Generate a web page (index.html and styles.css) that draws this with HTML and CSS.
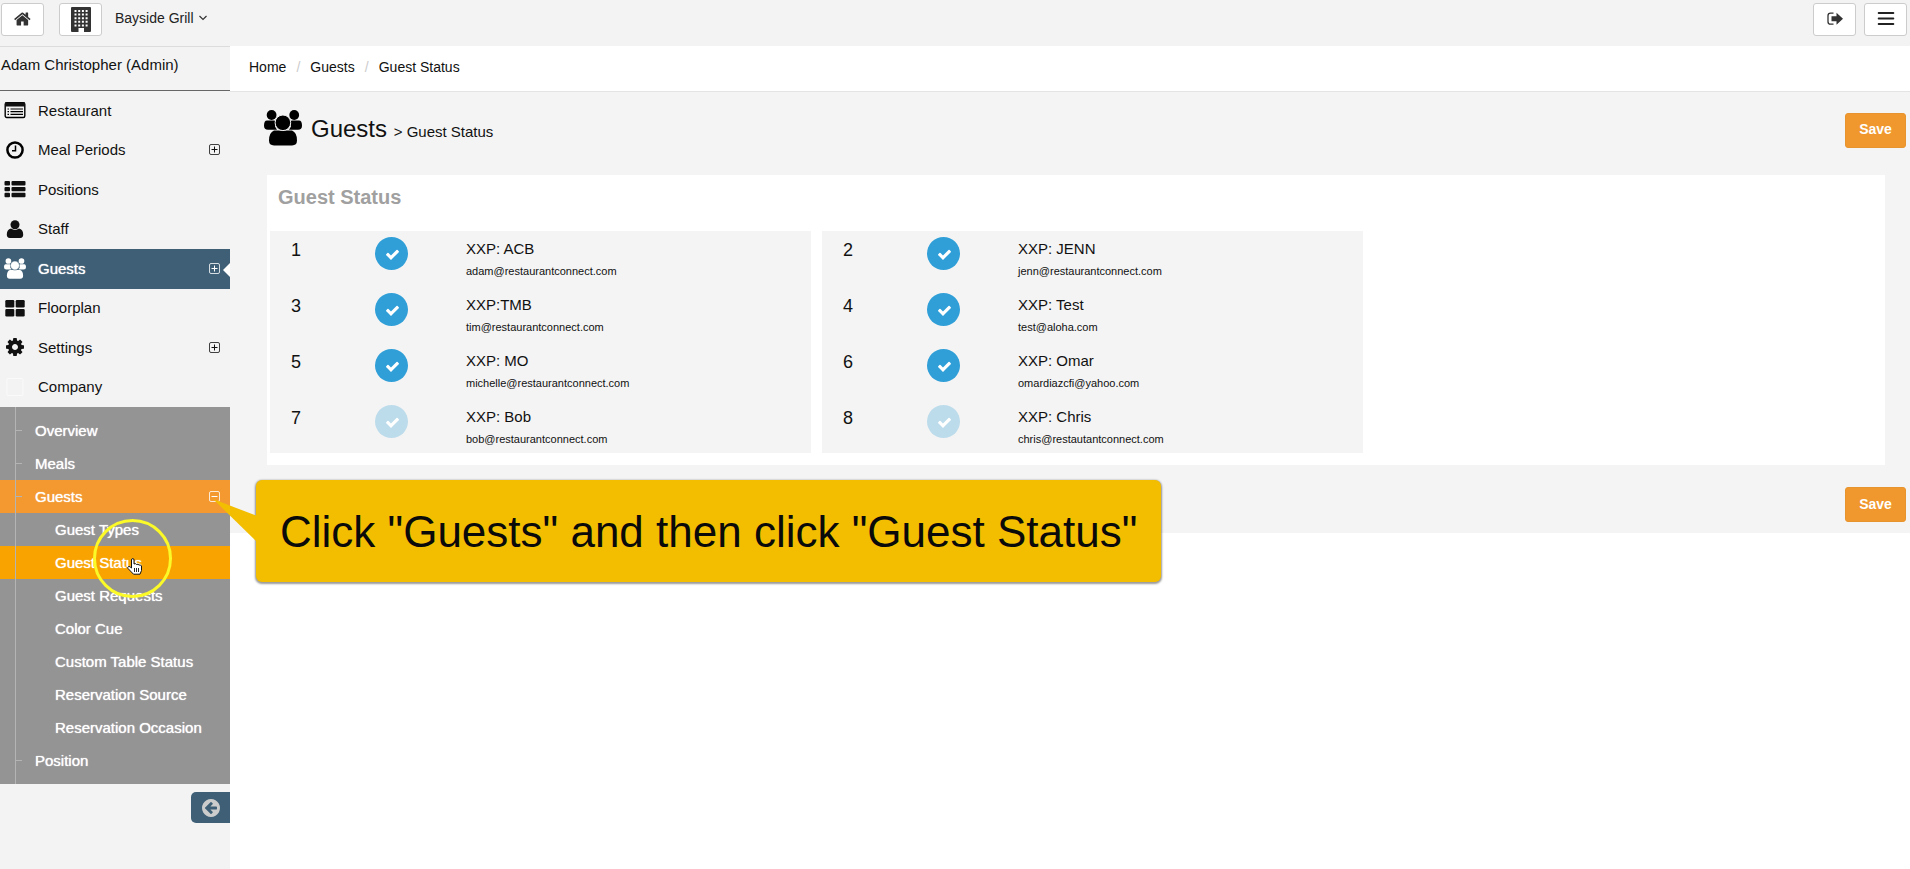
FILE: index.html
```html
<!DOCTYPE html>
<html lang="en">
<head>
<meta charset="utf-8">
<meta name="viewport" content="width=device-width, initial-scale=1">
<title>Guests - Guest Status</title>
<link rel="stylesheet" href="styles.css">
</head>
<body>
<svg class="symbols" aria-hidden="true">
  <symbol id="group" viewBox="0 0 38 36">
    <circle cx="7.6" cy="5" r="4.9"/><circle cx="30.2" cy="5" r="4.9"/>
    <path d="M3 10.500h7q2 0 2 2l-1 4 2 3.300H4q-4 0-4-4 0-5.300 3-5.300zM35 10.500h-7q-2 0-2 2l1 4-2 3.300h9q4 0 4-4 0-5.300-3-5.300z"/>
    <path d="M10 20.600h18q5 2 5 10 0 4.900-5 4.900H10q-5 0-5-4.900 0-8 5-10z"/>
    <circle class="halo" cx="18.900" cy="12.800" r="7.800"/>
  </symbol>
  <symbol id="plus" viewBox="0 0 11 11">
    <rect x=".5" y=".5" width="10" height="10" rx="1.500" fill="none" stroke="currentColor" stroke-width=".8"/>
    <path d="M2.500 5.500h6M5.500 2.500v6" stroke="currentColor"/>
  </symbol>
  <symbol id="minus" viewBox="0 0 11 11">
    <rect x=".5" y=".5" width="10" height="10" rx="1.500" fill="none" stroke="currentColor" stroke-width=".8"/>
    <path d="M2.500 5.500h6" stroke="currentColor"/>
  </symbol>
  <symbol id="check" viewBox="0 0 1792 1792">
    <path d="M1671 566q0 40-28 68l-724 724-136 136q-28 28-68 28t-68-28l-136-136-362-362q-28-28-28-68t28-68l136-136q28-28 68-28t68 28l294 295 656-657q28-28 68-28t68 28l136 136q28 28 28 68z"/>
  </symbol>
  <symbol id="building" viewBox="0 0 20 25">
    <path fill-rule="evenodd" d="M1 0h18q1 0 1 1v23q0 1-1 1h-6v-4H7.500v4H1q-1 0-1-1V1q0-1 1-1zM3.500 3v2h2V3zM7.200 3v2h2V3zM10.900 3v2h2V3zM14.600 3v2h2V3zM3.500 6.600v2h2v-2zM7.200 6.600v2h2v-2zM10.900 6.600v2h2v-2zM14.600 6.600v2h2v-2zM3.500 10.200v2h2v-2zM7.200 10.200v2h2v-2zM10.900 10.200v2h2v-2zM14.600 10.200v2h2v-2zM3.500 13.800v2h2v-2zM7.200 13.800v2h2v-2zM10.900 13.800v2h2v-2zM14.600 13.800v2h2v-2zM3.500 17.400v2h2v-2zM7.200 17.400v2h2v-2zM10.900 17.400v2h2v-2zM14.600 17.400v2h2v-2z"/>
  </symbol>
</svg>

<header class="topbar">
  <a class="tool" href="#" aria-label="Home"><svg class="i18" viewBox="0 0 1792 1792"><path d="M1408 992v480q0 26-19 45t-45 19h-384v-384h-256v384h-384q-26 0-45-19t-19-45v-480q0-1 .5-3t.5-3l575-474 575 474q1 2 1 6zm223-69l-62 74q-8 9-21 11h-3q-13 0-21-7l-692-577-692 577q-12 8-24 7-13-2-21-11l-62-74q-8-10-7-23.500t11-21.500l719-599q32-26 76-26t76 26l244 204v-195q0-14 9-23t23-9h192q14 0 23 9t9 23v408l219 182q10 8 11 21.500t-7 23.500z"/></svg></a>
  <a class="tool tool-building" href="#" aria-label="Company"><svg class="building"><use href="#building"/></svg></a>
  <button class="venue" type="button">Bayside Grill <svg class="chevron" viewBox="0 0 8 6"><path d="M.5 1L4 4.500 7.500 1" fill="none" stroke="#333" stroke-width="1.200"/></svg></button>
  <div class="tools">
    <button class="tool" type="button" aria-label="Log out"><svg class="i18" viewBox="0 0 18 18"><path d="M7.500 3.200H4.500Q2 3.200 2 5.700v6q0 2.500 2.500 2.500h3" fill="none" stroke="#333" stroke-width="1.300"/><path d="M5.500 6.200h5V2.700l6.500 6-6.500 6v-3.500h-5z"/></svg></button>
    <button class="tool" type="button" aria-label="Menu"><svg class="i18" viewBox="0 0 18 18"><path d="M1.700 3h14.600M1.700 8.500h14.600M1.700 14h14.600" stroke="#222" stroke-width="2" stroke-linecap="round"/></svg></button>
  </div>
</header>

<div class="layout">
  <aside class="sidebar">
    <div class="user">Adam Christopher (Admin)</div>
    <nav aria-label="Main">
      <ul class="menu">
        <li><a href="#"><svg class="ico" viewBox="0 0 22 18"><rect x="1.200" y="1.700" width="19.600" height="14.800" rx="1.500" fill="none" stroke="#000" stroke-width="1.400"/><path d="M1 1.500h20v4H1z"/><path d="M3.500 8h1.500M3.500 10.700h1.500M3.500 13.400h1.500M6.500 8h12.500M6.500 10.700h12.500M6.500 13.400h12.500" stroke="#000" stroke-width="1.200"/></svg>Restaurant</a></li>
        <li><a href="#"><svg class="ico" viewBox="0 0 22 18"><circle cx="11" cy="9" r="7.600" fill="none" stroke="#000" stroke-width="2.500"/><path d="M11.500 4.500v5.300H8" fill="none" stroke="#000" stroke-width="1.500"/></svg>Meal Periods<svg class="toggle"><use href="#plus"/></svg></a></li>
        <li><a href="#"><svg class="ico" viewBox="0 0 22 18"><rect x=".5" y="1" width="5.500" height="4.400" rx="1"/><rect x="7.500" y="1" width="14" height="4.400" rx="1"/><rect x=".5" y="6.900" width="5.500" height="4.400" rx="1"/><rect x="7.500" y="6.900" width="14" height="4.400" rx="1"/><rect x=".5" y="12.800" width="5.500" height="4.400" rx="1"/><rect x="7.500" y="12.800" width="14" height="4.400" rx="1"/></svg>Positions</a></li>
        <li><a href="#"><svg class="ico" viewBox="0 0 22 18"><circle cx="11" cy="4.800" r="4.500"/><path d="M7 8.600q4 2.600 8 0 4.200.8 4.200 6 0 3.400-3 3.400H5.800q-3 0-3-3.400 0-5.200 4.200-6z"/></svg>Staff</a></li>
        <li class="active"><a href="#"><svg class="ico group"><use href="#group"/></svg>Guests<svg class="toggle"><use href="#plus"/></svg></a></li>
        <li><a href="#"><svg class="ico" viewBox="0 0 22 18"><rect x="1.300" y="1" width="9" height="7.500" rx="1.200"/><rect x="11.700" y="1" width="9" height="7.500" rx="1.200"/><rect x="1.300" y="9.900" width="9" height="7.500" rx="1.200"/><rect x="11.700" y="9.900" width="9" height="7.500" rx="1.200"/></svg>Floorplan</a></li>
        <li><a href="#"><svg class="ico" viewBox="128 128 1536 1536"><path d="M1152 896q0-106-75-181t-181-75-181 75-75 181 75 181 181 75 181-75 75-181zm512-109v222q0 12-8 23t-20 13l-185 28q-19 54-39 91 35 50 107 138 10 12 10 25t-9 23q-27 37-99 108t-94 71q-12 0-26-9l-138-108q-44 23-91 38-16 136-29 186-7 28-36 28h-222q-14 0-24.500-8.500t-11.500-21.500l-28-184q-49-16-90-37l-141 107q-10 9-25 9-14 0-25-11-126-114-165-168-7-10-7-23 0-12 8-23 15-21 51-66.500t54-70.500q-27-50-41-99l-183-27q-13-2-21-12.500t-8-23.500v-222q0-12 8-23t19-13l186-28q14-46 39-92-40-57-107-138-10-12-10-24 0-10 9-23 26-36 98.500-107.500t94.500-71.500q13 0 26 10l138 107q44-23 91-38 16-136 29-186 7-28 36-28h222q14 0 24.500 8.500t11.500 21.500l28 184q49 16 90 37l142-107q9-9 24-9 13 0 25 10 129 119 165 170 7 8 7 22 0 12-8 23-15 21-51 66.500t-54 70.500q26 50 41 98l183 28q13 2 21 12.500t8 23.500z"/></svg>Settings<svg class="toggle"><use href="#plus"/></svg></a></li>
        <li><a href="#"><svg class="ico ghost" viewBox="0 0 22 18"><rect x="3" y=".5" width="16" height="17" rx="1" fill="none" stroke="currentColor"/></svg>Company</a></li>
      </ul>
      <ul class="submenu">
        <li class="branch"><a href="#">Overview</a></li>
        <li class="branch"><a href="#">Meals</a></li>
        <li class="branch open"><a href="#">Guests<svg class="toggle"><use href="#minus"/></svg></a></li>
        <li class="leaf"><a href="#">Guest Types</a></li>
        <li class="leaf current"><a href="#" aria-current="page">Guest Status</a></li>
        <li class="leaf"><a href="#">Guest Requests</a></li>
        <li class="leaf"><a href="#">Color Cue</a></li>
        <li class="leaf"><a href="#">Custom Table Status</a></li>
        <li class="leaf"><a href="#">Reservation Source</a></li>
        <li class="leaf"><a href="#">Reservation Occasion</a></li>
        <li class="branch"><a href="#">Position</a></li>
      </ul>
    </nav>
    <button class="collapse" type="button" aria-label="Collapse menu"><svg class="i18" viewBox="128 128 1536 1536"><path d="M1408 960v-128q0-26-19-45t-45-19h-502l189-189q19-19 19-45t-19-45l-91-91q-18-18-45-18t-45 18l-362 362-91 91q-18 18-18 45t18 45l91 91 362 362q18 18 45 18t45-18l91-91q18-18 18-45t-18-45l-189-189h502q26 0 45-19t19-45zm256-64q0 209-103 385.500t-279.500 279.500-385.500 103-385.500-103-279.500-279.500-103-385.500 103-385.500 279.500-279.500 385.500-103 385.500 103 279.500 279.500 103 385.500z"/></svg></button>
  </aside>

  <main class="main">
    <nav class="crumbs" aria-label="Breadcrumb">
      <a href="#">Home</a><span class="sep">/</span><a href="#">Guests</a><span class="sep">/</span><a href="#">Guest Status</a>
    </nav>
    <form class="content">
      <div class="heading">
        <svg class="title-icon"><use href="#group"/></svg>
        <h1>Guests <small>&gt; Guest Status</small></h1>
        <button class="save" type="button">Save</button>
      </div>
      <section class="panel">
        <h2>Guest Status</h2>
        <div class="columns">
          <ul class="statuses">
            <li><span class="num">1</span><span class="tick"><input type="checkbox" id="s1" checked><svg><use href="#check"/></svg></span><label for="s1">XXP: ACB<small>adam@restaurantconnect.com</small></label></li>
            <li><span class="num">3</span><span class="tick"><input type="checkbox" id="s3" checked><svg><use href="#check"/></svg></span><label for="s3">XXP:TMB<small>tim@restaurantconnect.com</small></label></li>
            <li><span class="num">5</span><span class="tick"><input type="checkbox" id="s5" checked><svg><use href="#check"/></svg></span><label for="s5">XXP: MO<small>michelle@restaurantconnect.com</small></label></li>
            <li><span class="num">7</span><span class="tick"><input type="checkbox" id="s7"><svg><use href="#check"/></svg></span><label for="s7">XXP: Bob<small>bob@restaurantconnect.com</small></label></li>
          </ul>
          <ul class="statuses">
            <li><span class="num">2</span><span class="tick"><input type="checkbox" id="s2" checked><svg><use href="#check"/></svg></span><label for="s2">XXP: JENN<small>jenn@restaurantconnect.com</small></label></li>
            <li><span class="num">4</span><span class="tick"><input type="checkbox" id="s4" checked><svg><use href="#check"/></svg></span><label for="s4">XXP: Test<small>test@aloha.com</small></label></li>
            <li><span class="num">6</span><span class="tick"><input type="checkbox" id="s6" checked><svg><use href="#check"/></svg></span><label for="s6">XXP: Omar<small>omardiazcfi@yahoo.com</small></label></li>
            <li><span class="num">8</span><span class="tick"><input type="checkbox" id="s8"><svg><use href="#check"/></svg></span><label for="s8">XXP: Chris<small>chris@restautantconnect.com</small></label></li>
          </ul>
        </div>
      </section>
      <div class="actions"><button class="save" type="button">Save</button></div>
    </form>
  </main>
</div>

<div class="ring"></div>
<svg class="pointer" viewBox="0 0 16 17"><path d="M4.500 9V2q0-1.400 1.300-1.400T7 2v4q1.800-.9 2.600.5 1.600-.7 2.400.5 2-.4 2.500 1v4.500l-1.500 3.700H6.500L1 10.500q-.8-1.500.6-2 1.200-.3 2.900 1.500z" fill="#fff" stroke="#111"/><path d="M7.500 10v4M9.500 10v4M11.500 10v4" stroke="#111" stroke-width=".9"/></svg>
<div class="callout">
  <svg class="tail" viewBox="0 0 44 43"><path d="M0 0L44 17V43z"/></svg>
  Click "Guests" and then click "Guest Status"
</div>
</body>
</html>
```

FILE: styles.css
```css
* { box-sizing: border-box; }

body {
  margin: 0;
  min-height: 100vh;
  display: flex;
  flex-direction: column;
  position: relative;
  background: #fff;
  color: #111;
  font-family: "Liberation Sans", Arial, sans-serif;
  font-size: 15px;
}

a { color: inherit; text-decoration: none; }
ul { list-style: none; margin: 0; padding: 0; }
button { font: inherit; color: inherit; cursor: pointer; }
svg { display: block; fill: currentColor; flex: none; }
.symbols { position: absolute; width: 0; height: 0; }
.i18 { width: 18px; height: 18px; }

.halo { stroke: var(--halo, #f4f4f4); stroke-width: 1px; }

/* Top bar */
.topbar {
  display: flex;
  align-items: flex-start;
  height: 46px;
  padding: 3px 3px 0 1px;
  background: #f3f3f3;
}
.tool {
  display: flex;
  align-items: center;
  justify-content: center;
  width: 43px;
  height: 33px;
  padding: 0 0 1px;
  border: 1px solid #ccc;
  border-radius: 3px;
  background: #fff;
  color: #333;
}
.tool-building { margin-left: 15px; }
.building { width: 20px; height: 25px; }
.venue {
  display: flex;
  align-items: center;
  gap: 5px;
  height: 30px;
  margin-left: 13px;
  padding: 0;
  border: 0;
  background: none;
  color: #222;
  font-size: 14px;
}
.chevron { width: 8px; height: 6px; }
.tools { display: flex; gap: 8px; margin-left: auto; }

.layout { display: flex; flex: 1; }

/* Sidebar */
.sidebar { width: 230px; flex: none; background: #f3f3f3; }
.user {
  height: 45px;
  padding: 0 1px;
  border-top: 1px solid #dcdcdc;
  border-bottom: 1px solid #666;
  line-height: 36px;
}
.menu {
  display: grid;
  grid-auto-rows: 1fr;
  min-height: 316px;
}
.menu a {
  display: flex;
  align-items: center;
  gap: 12px;
  height: 100%;
  padding: 0 10px 1px 4px;
}
.ico { width: 22px; height: 18px; }
.ico.group { height: 21px; }
.ghost { color: #fafafa; }
.toggle { width: 11px; height: 11px; margin-left: auto; }
.active {
  --halo: #3e5f75;
  position: relative;
  background: #3e5f75;
  color: #fff;
  text-shadow: 0 0 1px #fff;
}
.active::after {
  content: "";
  position: absolute;
  right: 0;
  top: 14px;
  border: 7px solid transparent;
  border-left-width: 0;
  border-right-color: #fff;
}
.submenu {
  position: relative;
  padding: 7px 0;
  background: #949494;
  color: #fff;
  text-shadow: 0 0 1px #fff;
}
.submenu::before {
  content: "";
  position: absolute;
  left: 15px;
  top: 0;
  bottom: 0;
  width: 1px;
  background: #b4b4b4;
}
.submenu a {
  display: flex;
  align-items: center;
  height: 33px;
  padding: 0 10px 1px 0;
}
.submenu .branch a { padding-left: 15px; }
.branch a::before {
  content: "";
  width: 7px;
  height: 1px;
  margin-right: 13px;
  background: #b4b4b4;
}
.submenu .leaf a { padding-left: 55px; }
.open { background: #f3992f; }
.current { background: #f9a300; }
.collapse {
  display: flex;
  align-items: center;
  justify-content: center;
  width: 39px;
  height: 31px;
  margin: 8px 0 0 auto;
  padding: 0;
  border: 0;
  border-radius: 5px 0 0 5px;
  background: #3e5f75;
  color: #ccc;
}

/* Main area */
.main { flex: 1; min-width: 0; }
.crumbs {
  display: flex;
  align-items: center;
  height: 46px;
  padding: 0 19px 3px;
  border-bottom: 1px solid #e4e4e4;
  font-size: 14px;
}
.sep { width: 24px; text-align: center; color: #ccc; }
.content { background: #f4f4f4; padding-bottom: 11px; }
.heading {
  display: flex;
  align-items: center;
  height: 83px;
  padding: 0 4px 7px 34px;
}
.title-icon { width: 38px; height: 36px; margin-bottom: 4px; color: #000; }
h1 {
  margin: 0 auto 0 9px;
  font-size: 24px;
  font-weight: 400;
  line-height: 28px;
}
h1 small { font-size: 15px; }
.save {
  width: 61px;
  height: 35px;
  padding: 0 0 2px;
  border: 1px solid #e8942e;
  border-radius: 3px;
  background: #f0982d;
  color: #fff;
  font-size: 14px;
  font-weight: 700;
}
.panel {
  margin: 0 25px 0 37px;
  padding: 0 3px 12px;
  background: #fff;
}
h2 {
  margin: 0;
  padding: 10px 8px 22px;
  color: #a0a0a0;
  font-size: 20px;
  line-height: 24px;
}
.columns { display: flex; gap: 11px; }
.statuses {
  display: grid;
  gap: 2px;
  width: 34%;
  max-width: 541px;
  background: #f4f4f4;
}
.statuses li {
  display: grid;
  grid-template-columns: 84px 91px 1fr;
  min-height: 54px;
  padding: 6px 0 0 21px;
}
.num { font-size: 18px; line-height: 26px; }
.tick { position: relative; width: 33px; height: 33px; }
.tick input {
  appearance: none;
  display: block;
  width: 33px;
  height: 33px;
  margin: 0;
  border-radius: 50%;
  background: #bddceb;
}
.tick input:checked { background: #309fd8; }
.tick svg {
  position: absolute;
  left: 10px;
  top: 10px;
  width: 15px;
  height: 15px;
  color: #fff;
  pointer-events: none;
}
label { line-height: 23px; }
label small { display: block; font-size: 11px; line-height: 22px; }
.actions { display: flex; justify-content: flex-end; padding: 22px 4px 0 0; }

/* Guided tour overlay */
.ring {
  position: absolute;
  left: 93px;
  top: 519px;
  width: 79px;
  height: 79px;
  border: 3px solid #fbf928;
  border-radius: 50%;
  pointer-events: none;
}
.pointer { position: absolute; left: 127px; top: 558px; width: 16px; height: 17px; }
.callout {
  position: absolute;
  left: 256px;
  top: 480px;
  padding: 27px 24px 25px;
  border-radius: 6px;
  background: #f3be00;
  box-shadow: 0 1px 2px 1px rgba(0, 0, 0, 0.4);
  color: #0a0a0a;
  font-size: 44px;
  line-height: 50px;
  white-space: nowrap;
}
.tail {
  position: absolute;
  left: -43px;
  top: 19px;
  width: 44px;
  height: 43px;
  color: #f3be00;
}
```
